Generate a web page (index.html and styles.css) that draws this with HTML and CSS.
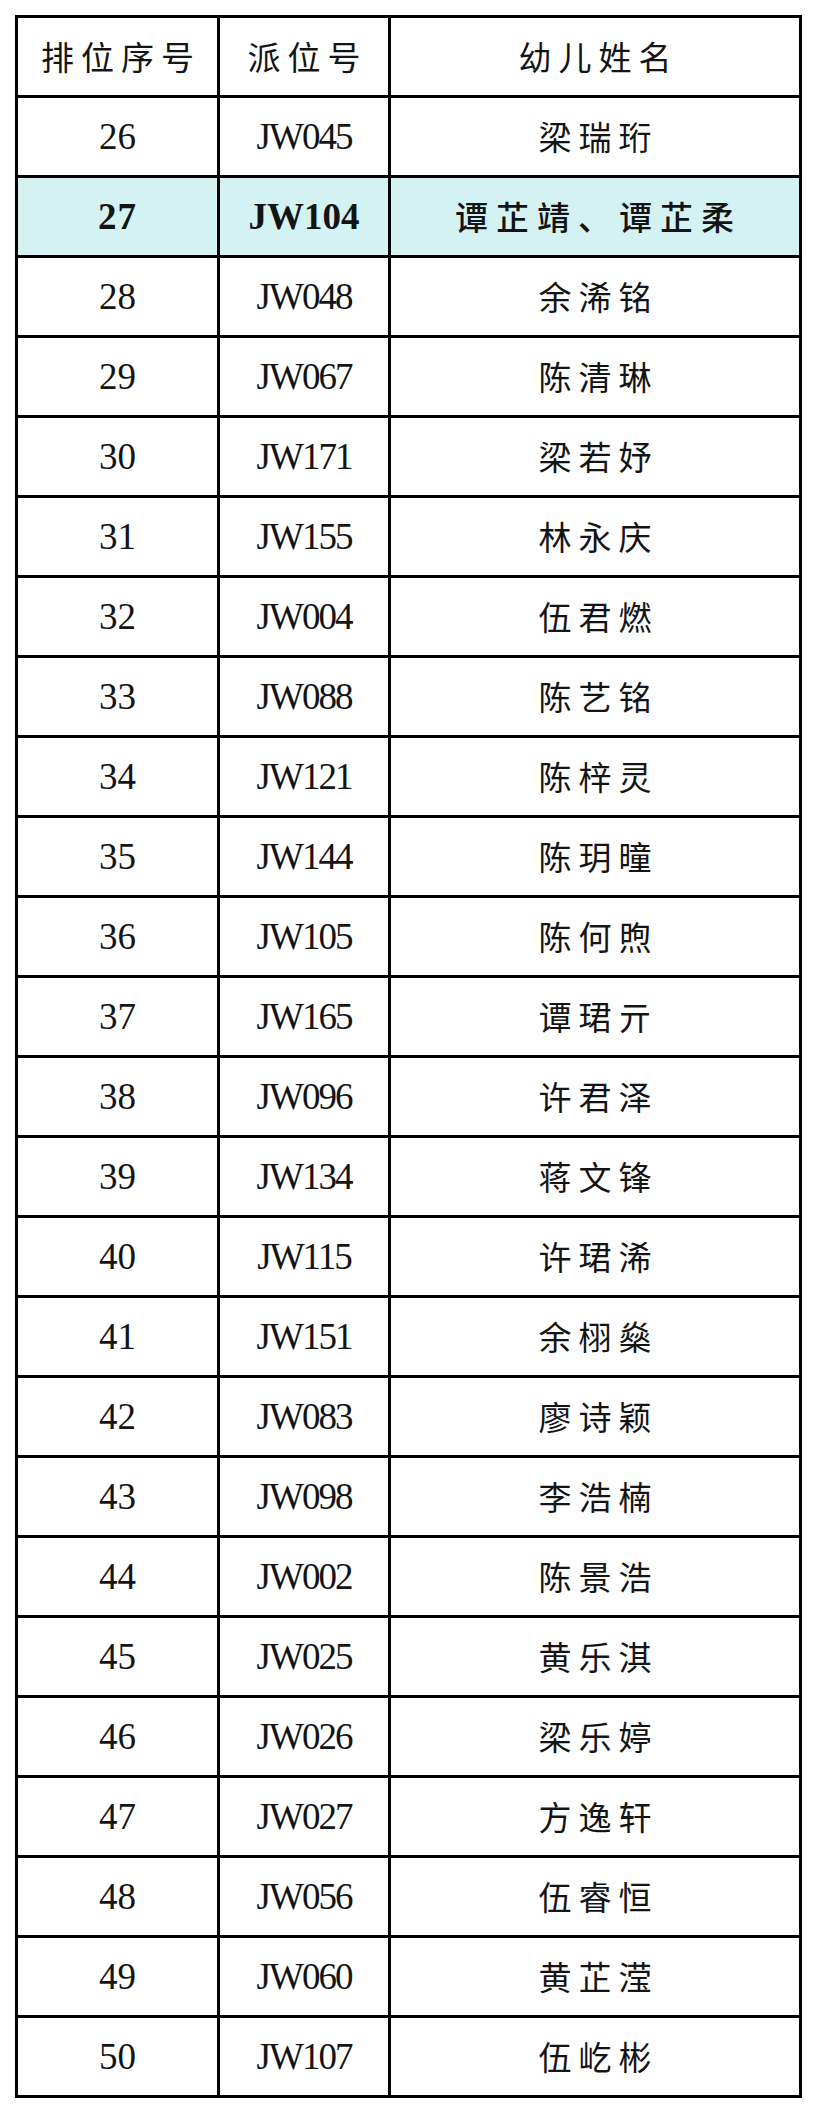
FILE: index.html
```html
<!DOCTYPE html>
<html lang="zh-CN">
<head>
<meta charset="utf-8">
<title>排位表</title>
<link rel="stylesheet" href="styles.css">
</head>
<body>
<table class="roster">
  <colgroup>
    <col class="c-rank">
    <col class="c-code">
    <col class="c-name">
  </colgroup>
  <thead>
    <tr class="head"><th class="cjk">排位序号</th><th class="cjk">派位号</th><th class="cjk">幼儿姓名</th></tr>
  </thead>
  <tbody>
    <tr><td class="num">26</td><td class="code">JW045</td><td class="cjk">梁瑞珩</td></tr>
    <tr class="hl"><td class="num">27</td><td class="code">JW104</td><td class="cjk">谭芷靖、谭芷柔</td></tr>
    <tr><td class="num">28</td><td class="code">JW048</td><td class="cjk">余浠铭</td></tr>
    <tr><td class="num">29</td><td class="code">JW067</td><td class="cjk">陈清琳</td></tr>
    <tr><td class="num">30</td><td class="code">JW171</td><td class="cjk">梁若妤</td></tr>
    <tr><td class="num">31</td><td class="code">JW155</td><td class="cjk">林永庆</td></tr>
    <tr><td class="num">32</td><td class="code">JW004</td><td class="cjk">伍君燃</td></tr>
    <tr><td class="num">33</td><td class="code">JW088</td><td class="cjk">陈艺铭</td></tr>
    <tr><td class="num">34</td><td class="code">JW121</td><td class="cjk">陈梓灵</td></tr>
    <tr><td class="num">35</td><td class="code">JW144</td><td class="cjk">陈玥曈</td></tr>
    <tr><td class="num">36</td><td class="code">JW105</td><td class="cjk">陈何煦</td></tr>
    <tr><td class="num">37</td><td class="code">JW165</td><td class="cjk">谭珺亓</td></tr>
    <tr><td class="num">38</td><td class="code">JW096</td><td class="cjk">许君泽</td></tr>
    <tr><td class="num">39</td><td class="code">JW134</td><td class="cjk">蒋文锋</td></tr>
    <tr><td class="num">40</td><td class="code">JW115</td><td class="cjk">许珺浠</td></tr>
    <tr><td class="num">41</td><td class="code">JW151</td><td class="cjk">余栩燊</td></tr>
    <tr><td class="num">42</td><td class="code">JW083</td><td class="cjk">廖诗颖</td></tr>
    <tr><td class="num">43</td><td class="code">JW098</td><td class="cjk">李浩楠</td></tr>
    <tr><td class="num">44</td><td class="code">JW002</td><td class="cjk">陈景浩</td></tr>
    <tr><td class="num">45</td><td class="code">JW025</td><td class="cjk">黄乐淇</td></tr>
    <tr><td class="num">46</td><td class="code">JW026</td><td class="cjk">梁乐婷</td></tr>
    <tr><td class="num">47</td><td class="code">JW027</td><td class="cjk">方逸轩</td></tr>
    <tr><td class="num">48</td><td class="code">JW056</td><td class="cjk">伍睿恒</td></tr>
    <tr><td class="num">49</td><td class="code">JW060</td><td class="cjk">黄芷滢</td></tr>
    <tr><td class="num">50</td><td class="code">JW107</td><td class="cjk">伍屹彬</td></tr>
  </tbody>
</table>
</body>
</html>
```

FILE: styles.css
```css
html, body {
  margin: 0;
  padding: 0;
  background: #ffffff;
}

body {
  padding: 15px 0 0 15px;
  color: #141414;
}

.roster {
  border-collapse: collapse;
  table-layout: fixed;
  width: 787px;
}

.c-rank { width: 202px; }
.c-code { width: 171px; }
.c-name { width: 411px; }

.roster th,
.roster td {
  border: 3px solid #000000;
  height: 77px;
  padding: 0;
  text-align: center;
  vertical-align: middle;
  font-weight: 400;
}

.roster tr {
  height: 80px;
}

.cjk {
  font-family: "Noto Sans CJK SC", "Noto Sans", sans-serif;
  font-size: 33px;
  letter-spacing: 7px;
  text-indent: 7px;
  line-height: 1;
}

.num,
.code {
  font-family: "Liberation Serif", "DejaVu Serif", serif;
  font-size: 37px;
  line-height: 1;
  padding-top: 6px;
}

.code {
  letter-spacing: -2px;
}

.hl td {
  background: #d3f2f1;
}

.hl .num,
.hl .code {
  font-weight: 700;
}

.hl .num {
  letter-spacing: 1px;
}

.hl .code {
  letter-spacing: 0;
}

.hl .cjk {
  font-weight: 500;
  letter-spacing: 8px;
}
```
